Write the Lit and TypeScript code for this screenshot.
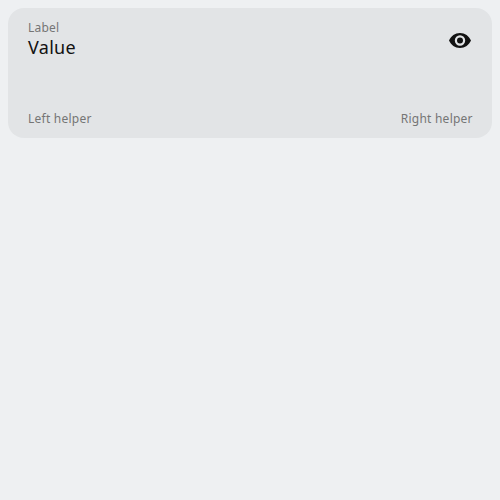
import { LitElement, html, css } from "lit";
import { customElement } from "lit/decorators.js";

@customElement("app-root")
export class AppRoot extends LitElement {
  static styles = css`
    :host {
      display: block;
      box-sizing: border-box;
      height: 100vh;
      padding: 8px;
      background: #eef0f2;
      font-family: "Noto Sans", sans-serif;
    }
    .field {
      display: flex;
      flex-direction: column;
      justify-content: space-between;
      box-sizing: border-box;
      height: 130px;
      padding: 12px 20px 11px;
      border-radius: 16px;
      background: #e2e4e6;
    }
    .top, .helpers {
      display: flex;
      justify-content: space-between;
    }
    .label, .helpers {
      color: #757575;
      font-size: 12px;
      line-height: 16px;
      letter-spacing: 0.2px;
    }
    .helpers {
      letter-spacing: 0.24px;
      margin-right: -0.8px;
    }
    .value {
      color: #121212;
      font-size: 18px;
      line-height: 22px;
      letter-spacing: 0.3px;
    }
    .icon {
      display: block;
      width: 24px;
      height: 24px;
      margin: 8px 0 0;
      fill: #121212;
    }
  `;

  render() {
    return html`
      <div class="field">
        <div class="top">
          <div>
            <div class="label">Label</div>
            <div class="value">Value</div>
          </div>
          <svg class="icon" viewBox="0 0 24 24">
            <path fill-rule="evenodd" d="M12 5C7 5 3 8 1 12.500C3 17 7 20 12 20s9-3 11-7.500C21 8 17 5 12 5zM12 7.300a5.200 5.200 0 1 1 0 10.400a5.200 5.200 0 0 1 0-10.400zM12 9.500a3 3 0 1 0 0 6a3 3 0 0 0 0-6z" />
          </svg>
        </div>
        <div class="helpers">
          <span>Left helper</span>
          <span>Right helper</span>
        </div>
      </div>
    `;
  }
}
